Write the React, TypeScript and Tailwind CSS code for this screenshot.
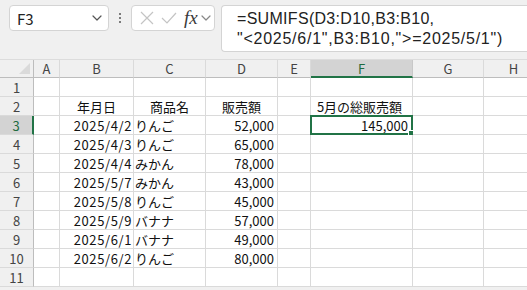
import React from "react";

const cols = [
  { id: "A", w: 26 },
  { id: "B", w: 74 },
  { id: "C", w: 72 },
  { id: "D", w: 72 },
  { id: "E", w: 33 },
  { id: "F", w: 102 },
  { id: "G", w: 71 },
  { id: "H", w: 60 },
];

type Row = { b?: string; c?: string; d?: string; f?: string; bh?: boolean };

const rows: Row[] = [
  {},
  { b: "年月日", c: "商品名", d: "販売額", f: "5月の総販売額", bh: true },
  { b: "2025/4/2", c: "りんご", d: "52,000", f: "145,000" },
  { b: "2025/4/3", c: "りんご", d: "65,000" },
  { b: "2025/4/4", c: "みかん", d: "78,000" },
  { b: "2025/5/7", c: "みかん", d: "43,000" },
  { b: "2025/5/8", c: "りんご", d: "45,000" },
  { b: "2025/5/9", c: "バナナ", d: "57,000" },
  { b: "2025/6/1", c: "バナナ", d: "49,000" },
  { b: "2025/6/2", c: "りんご", d: "80,000" },
  {},
];

const font = { fontFamily: '"Noto Sans CJK JP", "Noto Sans", sans-serif' };

function Chevron({ className }: { className?: string }) {
  return (
    <svg className={className} width="10" height="6" viewBox="0 0 10 6" fill="none">
      <path d="M1 1l4 4 4-4" stroke="currentColor" strokeWidth="1.2" strokeLinecap="round" strokeLinejoin="round" />
    </svg>
  );
}

export default function App() {
  return (
    <div className="w-[527px] h-[290px] overflow-hidden bg-[#f0f0f0] text-[#222]" style={font}>
      {/* Formula bar area */}
      <div className="h-[59px] flex items-start pt-[5px] pl-[9px] gap-0">
        <div className="w-[100px] h-[26px] bg-white border border-[#d4d4d4] rounded-[4px] flex items-center justify-between pl-[7px] pr-[6px]">
          <span className="text-[15px] text-[#222] leading-none">F3</span>
          <Chevron className="text-[#555]" />
        </div>
        <div className="w-[22px] h-[26px] flex flex-col items-center justify-center gap-[2px]">
          <span className="w-[2px] h-[2px] bg-[#555] rounded-full" />
          <span className="w-[2px] h-[2px] bg-[#555] rounded-full" />
          <span className="w-[2px] h-[2px] bg-[#555] rounded-full" />
        </div>
        <div className="w-[84px] h-[26px] bg-white border border-[#d4d4d4] rounded-[4px] flex items-center pl-[8px] gap-[7px]">
          <svg width="14" height="14" viewBox="0 0 14 14">
            <path d="M1 1l12 12M13 1L1 13" stroke="#c4c4c4" strokeWidth="1.2" />
          </svg>
          <svg width="16" height="12" viewBox="0 0 16 12">
            <path d="M1 6l5 5L15 1" stroke="#c4c4c4" strokeWidth="1.2" fill="none" />
          </svg>
          <span
            className="text-[19px] italic text-[#3a3a3a] leading-none -mt-[2px]"
            style={{ fontFamily: '"Liberation Serif", "DejaVu Serif", serif' }}
          >
            fx
          </span>
          <Chevron className="text-[#888] -ml-[4px]" />
        </div>
        <div
          className="ml-[6px] flex-1 h-[47px] bg-white border border-[#d4d4d4] rounded-l-[4px] border-r-0 pl-[15px] pt-[3px] text-[16px] leading-[20px] text-[#222]"
          style={{ fontFamily: '"Liberation Sans", Arial, sans-serif' }}
        >
          <div className="tracking-[0.3px]">=SUMIFS(D3:D10,B3:B10,</div>
          <div className="tracking-[0.75px]">"&lt;2025/6/1",B3:B10,"&gt;=2025/5/1")</div>
        </div>
      </div>

      {/* Grid */}
      <div className="text-[13px]">
        {/* header row */}
        <div className="flex h-[19px] border-t border-[#dcdcdc]">
          <div className="w-[34px] shrink-0 relative border-r border-b border-[#bdbdbd]">
            <div className="absolute right-[3px] bottom-[3px] w-0 h-0 border-l-[11px] border-l-transparent border-b-[11px] border-b-[#dadada]" />
          </div>
          {cols.map((c) => {
            const sel = c.id === "F";
            return (
              <div
                key={c.id}
                className={
                  "shrink-0 flex items-center justify-center leading-none " +
                  (sel
                    ? "bg-[#d3d3d3] text-[#1e6b3f] border-b-2 border-b-[#217346] border-r border-r-[#c8c8c8]"
                    : "text-[#444] border-b border-b-[#bdbdbd] border-r border-r-[#dadada]")
                }
                style={{ width: c.w }}
              >
                {c.id}
              </div>
            );
          })}
        </div>
        {rows.map((r, i) => {
          const n = i + 1;
          const selRow = n === 3;
          return (
            <div key={n} className="flex h-[19px]">
              <div
                className={
                  "w-[34px] shrink-0 flex items-center justify-center leading-none border-b border-b-[#dadada] " +
                  (selRow ? "bg-[#d3d3d3] text-[#1e6b3f] border-r-2 border-r-[#217346]" : "text-[#444] border-r border-r-[#bdbdbd]")
                }
              >
                {n}
              </div>
              {cols.map((c) => {
                let content: string | undefined;
                let align = "justify-start pl-[2px]";
                if (c.id === "B") {
                  content = r.b;
                  align = r.bh ? "justify-center" : "justify-end pr-[1px] tracking-[0.6px]";
                } else if (c.id === "C") {
                  content = r.c;
                  align = r.bh ? "justify-center" : "justify-start pl-[1px]";
                } else if (c.id === "D") {
                  content = r.d;
                  align = r.bh ? "justify-center" : "justify-end pr-[3px]";
                } else if (c.id === "F") {
                  content = r.f;
                  align = r.bh ? "justify-center pr-[4px]" : "justify-end pr-[4px]";
                }
                const isSel = c.id === "F" && n === 3;
                return (
                  <div
                    key={c.id}
                    className={"shrink-0 relative flex items-center bg-white text-[#111] whitespace-nowrap border-r border-b border-[#dadada] leading-none " + align}
                    style={{ width: c.w }}
                  >
                    {content}
                    {isSel && (
                      <>
                        <div className="absolute -left-[1px] -top-[1px] -right-[1px] -bottom-[1px] border-2 border-[#217346] pointer-events-none" />
                        <div className="absolute -right-[3px] -bottom-[3px] w-[5px] h-[5px] bg-[#217346] border border-white box-content" />
                      </>
                    )}
                  </div>
                );
              })}
            </div>
          );
        })}
      </div>
    </div>
  );
}
